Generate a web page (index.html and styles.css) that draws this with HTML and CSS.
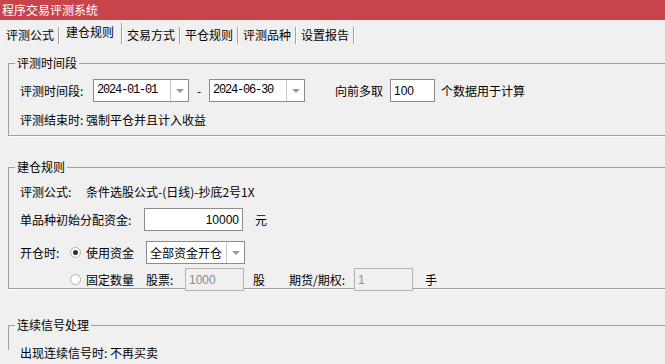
FILE: index.html
```html
<!DOCTYPE html>
<html lang="zh-CN">
<head>
  <meta charset="UTF-8">
  <title>程序交易评测系统</title>
  <link rel="stylesheet" href="styles.css">
</head>
<body>
  <div class="titlebar">程序交易评测系统</div>

  <div class="tabs">
    <div class="tab first">评测公式</div>
    <div class="tab active">建仓规则</div>
    <div class="tab">交易方式</div>
    <div class="tab">平仓规则</div>
    <div class="tab">评测品种</div>
    <div class="tab">设置报告</div>
  </div>

  <fieldset class="group group-time">
    <legend>评测时间段</legend>
    <div class="row row-dates">
      <span class="label w73">评测时间段:</span>
      <div class="combo date"><span class="combo-text mono">2024-01-01</span><span class="combo-btn"></span></div>
      <span class="dash">-</span>
      <div class="combo date"><span class="combo-text mono">2024-06-30</span><span class="combo-btn"></span></div>
      <span class="label fwd">向前多取</span>
      <input class="edit count" value="100">
      <span class="label">个数据用于计算</span>
    </div>
    <div class="row row-text">评测结束时: 强制平仓并且计入收益</div>
  </fieldset>

  <fieldset class="group group-open">
    <legend>建仓规则</legend>
    <div class="row row-text">
      <span class="label w66">评测公式:</span>
      <span>条件选股公式-(日线)-抄底2号1X</span>
    </div>
    <div class="row row-money">
      <span class="label w124">单品种初始分配资金:</span>
      <input class="edit money" value="10000">
      <span class="label unit">元</span>
    </div>
    <div class="row row-mode">
      <span class="label w50">开仓时:</span>
      <span class="radio checked"></span>
      <span class="label w60">使用资金</span>
      <div class="combo mode"><span class="combo-text">全部资金开仓</span><span class="combo-btn"></span></div>
    </div>
    <div class="row row-fixed">
      <span class="radio"></span>
      <span class="label w60">固定数量</span>
      <span class="label w39">股票:</span>
      <input class="edit off" value="1000" disabled>
      <span class="label w36 unit">股</span>
      <span class="label w65">期货/期权:</span>
      <input class="edit off" value="1" disabled>
      <span class="label unit hand">手</span>
    </div>
  </fieldset>

  <fieldset class="group group-signal">
    <legend>连续信号处理</legend>
    <div class="row row-text">出现连续信号时: 不再买卖</div>
  </fieldset>
</body>
</html>
```

FILE: styles.css
```css
body {
  margin: 0;
  width: 665px;
  height: 364px;
  overflow: hidden;
  background-color: #f0f0f0;
  font-family: "Noto Sans CJK SC", "Liberation Sans", sans-serif;
  font-size: 12px;
  color: #000;
}

.titlebar {
  height: 20px;
  line-height: 20px;
  padding-left: 2px;
  background-color: #c8434a;
  color: #fff;
}

.tabs {
  display: flex;
  align-items: flex-end;
  height: 24px;
}

.tab {
  height: 17px;
  line-height: 16px;
  padding: 0 4px 0 5px;
  border-right: 1px solid #a0a0a0;
  box-shadow: 1px 0 0 #fff;
}

.tab.first {
  padding: 0 4px 0 6px;
}

.tab.active {
  height: 21px;
  line-height: 18px;
  padding: 0 7px 0 6px;
  border-left: 1px solid #fff;
}

.group {
  margin: 12px -20px 0 8px;
  padding: 0 0 0 11px;
  border: 1px solid #a0a0a0;
  box-shadow: 1px 1px 0 #fff;
}

.group legend {
  margin-left: -5px;
  padding: 0 2px;
  line-height: 14px;
  height: 14px;
}

.group-time {
  height: 69px;
  padding-top: 9px;
}

.group-open {
  margin-top: 24px;
  height: 120px;
  padding-top: 7px;
}

.group-signal {
  margin-top: 29px;
  height: 20px;
  padding-top: 11px;
  border-bottom: none;
  box-shadow: none;
}

.row {
  display: flex;
  align-items: center;
  white-space: nowrap;
}

.row-dates {
  height: 23px;
}

.group-time .row-text {
  height: 20px;
  margin-top: 7px;
}

.group-open .row-text {
  height: 20px;
}

.row-money {
  height: 23px;
  margin-top: 7px;
}

.row-mode {
  height: 23px;
  margin-top: 10px;
}

.row-fixed {
  height: 23px;
  margin-top: 4px;
  padding-left: 50px;
}

.group-signal .row-text {
  height: 19px;
}

.w36 { width: 36px; }
.w39 { width: 39px; }
.w50 { width: 50px; }
.w60 { width: 60px; }
.w65 { width: 65px; }
.w66 { width: 66px; }
.w73 { width: 73px; }
.w124 { width: 124px; }

.combo {
  display: flex;
  box-sizing: border-box;
  height: 23px;
  border: 1px solid #8c8c8c;
  background-color: #fff;
}

.combo-text {
  flex: 1;
  line-height: 21px;
  padding-left: 3px;
}

.combo-text.mono {
  font-family: "Liberation Mono", monospace;
  font-size: 12px;
  letter-spacing: -1.2px;
}

.combo-btn {
  position: relative;
  width: 17px;
  border-left: 1px solid #c8c8c8;
}

.combo-btn::after {
  content: "";
  position: absolute;
  left: 5px;
  top: 9px;
  border-left: 4px solid transparent;
  border-right: 4px solid transparent;
  border-top: 4px solid #9a9a9a;
}

.combo.date {
  width: 96px;
}

.combo.mode {
  width: 99px;
}

.dash {
  width: 20px;
  text-align: center;
}

.fwd {
  margin-left: 30px;
  width: 55px;
}

.edit {
  box-sizing: border-box;
  height: 23px;
  margin: 0;
  padding: 0 3px;
  border: 1px solid #8c8c8c;
  background-color: #fff;
  font-family: "Liberation Sans", sans-serif;
  font-size: 12px;
  color: #000;
  outline: none;
}

.edit.count {
  width: 45px;
  margin-right: 6px;
}

.edit.money {
  width: 99px;
  text-align: right;
  margin-right: 6px;
}

.edit.off {
  width: 59px;
  background-color: #f0f0f0;
  border-color: #b4b4b4;
  color: #8a8a8a;
}

.unit {
  margin-left: 6px;
}

.w36.unit {
  margin-left: 9px;
  width: 36px;
}

.hand {
  margin-left: 12px;
}

.radio {
  box-sizing: border-box;
  position: relative;
  width: 11px;
  height: 11px;
  margin-right: 5px;
  border: 1px solid #b0b0b0;
  border-radius: 50%;
  background-color: #fff;
}

.radio.checked::after {
  content: "";
  position: absolute;
  left: 2px;
  top: 2px;
  width: 5px;
  height: 5px;
  border-radius: 50%;
  background-color: #333;
}
```
